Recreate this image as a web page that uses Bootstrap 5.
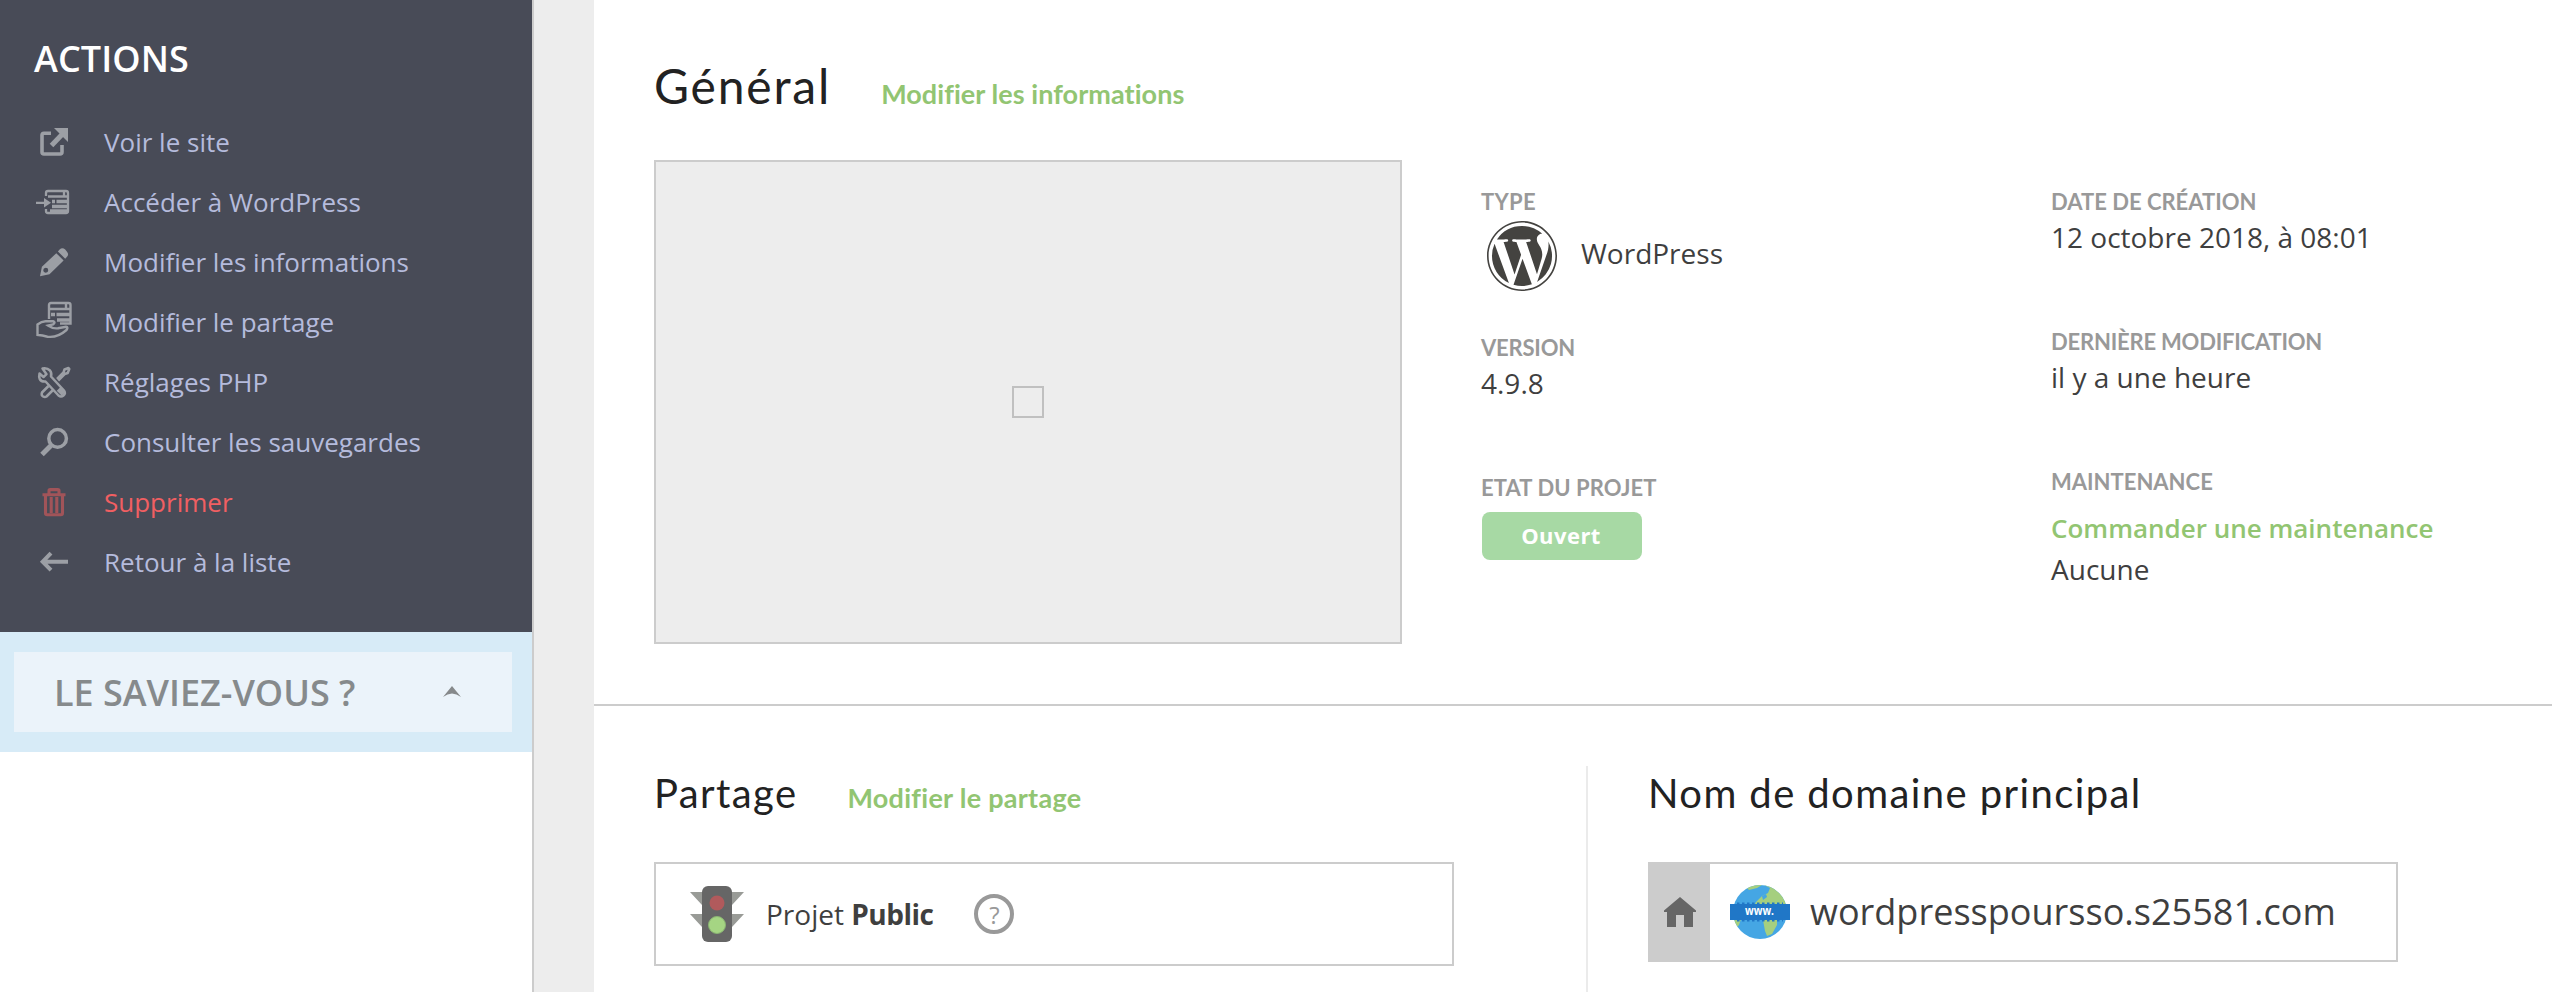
<!DOCTYPE html>
<html lang="fr">
<head>
<meta charset="utf-8">
<meta name="viewport" content="width=device-width, initial-scale=1">
<title>Projet WordPress</title>
<link href="https://cdn.jsdelivr.net/npm/bootstrap@5.3.0/dist/css/bootstrap.min.css" rel="stylesheet">
<style>
  body { font-family: "Open Sans", sans-serif; font-size: 28px; line-height: 40px; color: #3f3f3f; background: #ededed; }
  .shell { height: 992px; }
  a { text-decoration: none; }

  /* Sidebar */
  .side { width: 534px; border-right: 2px solid #ccc; background: #fff; }
  .actions { height: 632px; padding: 35px 0 0 34px; background: #484b57; }
  .actions h2 { font-size: 36px; line-height: 48px; font-weight: 600; letter-spacing: .1px; color: #fff; margin: 0 0 29px; }
  .actions a { height: 60px; gap: 30px; font-size: 26px; line-height: 60px; color: #b5bbdc; }
  .actions span { padding-bottom: 1px; }
  .actions svg { width: 40px; height: 40px; color: #9c9fa5; margin-bottom: 2px; }
  .actions a.remove { color: #f15f62; }
  .actions a.remove svg { color: #a15459; }
  .tip { height: 120px; padding: 20px 20px 20px 14px; background: #d7ebf7; }
  .tip-head { background: #ebf3fa; padding: 2px 49px 0 40px; font-size: 36px; font-weight: 600; color: #868a8c; }
  .tip-head svg { width: 22px; height: 12px; margin-bottom: 2px; }

  /* Main panel */
  .panel { margin-left: 60px; background: #fff; min-width: 0; }
  .general { height: 706px; padding: 54px 60px 0; border-bottom: 2px solid #ccc; }
  h1, h3 { font-family: Lato, sans-serif; font-weight: 400; color: #222; margin: 0; white-space: nowrap; }
  h1 { font-size: 48px; line-height: 64px; letter-spacing: 1.8px; }
  h3 { font-size: 40px; line-height: 52px; letter-spacing: 1.4px; }
  .edit { font-family: Lato, sans-serif; font-size: 27px; font-weight: 700; color: #92c572; letter-spacing: .06px; }
  .preview-row { margin-top: 42px; }
  .shot { width: 748px; height: 484px; border: 2px solid #ccc; background: #ededed; margin-right: 79px; }
  .shot i { width: 32px; height: 32px; border: 2px solid #c0c0c0; }
  .facts { width: 570px; padding-top: 27px; }
  .fact { height: 140px; }
  .fact.tall { height: 146px; }
  .fact-label { font-family: Lato, sans-serif; font-size: 22px; font-weight: 700; line-height: 30px; color: #999; text-transform: uppercase; white-space: nowrap; }
  .state { width: 160px; height: 48px; margin: 9px 0 0 1px; border-radius: 8px; background: #a7d9a4; color: #fff; font-size: 22px; font-weight: 700; letter-spacing: .45px; line-height: 46px; padding-right: 2px; }
  .order { font-size: 26px; font-weight: 600; color: #92c572; margin: 11px 0 1px; }

  /* Lower columns */
  .lower { padding-top: 61px; height: 286px; }
  .share { width: 994px; padding-left: 60px; }
  .share-box { width: 800px; height: 104px; margin-top: 43px; border: 2px solid #ccc; padding-left: 34px; }
  .share-box > span { padding-bottom: 1px; }
  .help { width: 40px; height: 40px; border: 4px solid #999; border-radius: 50%; color: #999; font-size: 24px; line-height: 33px; margin-left: 41px; }
  .domain { padding-left: 60px; border-left: 2px solid #ebebeb; margin: -1px 0 0 -2px; padding-top: 1px; }
  .domain-box { width: 750px; height: 100px; margin-top: 43px; border: 2px solid #ccc; }
  .home { width: 60px; background: #ccc; padding-left: 14px; }
  .host { font-size: 36px; letter-spacing: .02px; margin-left: 20px; line-height: 50px; }
</style>
</head>
<body>
<div class="shell d-flex overflow-hidden">

  <aside class="side flex-shrink-0">
    <nav class="actions d-flex flex-column">
      <h2>ACTIONS</h2>
      <a href="#" class="d-flex align-items-center">
        <svg viewBox="0 0 40 40" fill="none" stroke="currentColor" stroke-width="3.6"><path d="M17 12.2H10a2 2 0 0 0-2 2V31a2 2 0 0 0 2 2h16a2 2 0 0 0 2-2v-7"/><path d="M17.5 24.5 29 12.5" stroke-width="5"/><path d="M20 7h14v14z" fill="currentColor" stroke="none"/></svg>
        <span>Voir le site</span></a>
      <a href="#" class="d-flex align-items-center">
        <svg viewBox="0 0 40 40" fill="none" stroke="currentColor" stroke-width="2.300"><path d="M12 15v-3q0-2 2-2h18q2 0 2 2v18q0 2-2 2H14q-2 0-2-2v-2M14 15.500h20M2 21.800h11M30 11v4"/><path d="M10 17l7 4.800-7 4.800z" fill="currentColor" stroke="none"/><path d="M18 20.500h3M22.500 20.500H33M18 25.500h15M16 30h17" stroke-width="3.400"/></svg>
        <span>Accéder à WordPress</span></a>
      <a href="#" class="d-flex align-items-center">
        <svg viewBox="0 0 40 40" fill="currentColor"><path d="M25.600 8.600q2.800-2.800 5.600 0l1.600 1.800q2.600 2.900 0 5.600l-1.600 1.700-7.300-7.300z"/><path fill-rule="evenodd" d="M22.300 12.200l7.300 7.300L15.500 33.300 6 35.300l1.900-9.600zM11.700 26.800a2.500 2.500 0 1 0 .1 5 2.500 2.500 0 0 0-.1-5z"/></svg>
        <span>Modifier les informations</span></a>
      <a href="#" class="d-flex align-items-center">
        <svg viewBox="0 0 40 40" fill="none" stroke="currentColor" stroke-width="2.400"><path d="M15 18V4q0-2 2-2h17.500q2 0 2 2v18.500H26M15 8h22M32 3v5"/><path d="M17 13.500h4M22.500 13.500H36M23 19h13" stroke-width="3.600"/><path d="M3.500 23.500q4-3.300 8-3.300H19q3 1.200 0 3.200L14 24.500q5 3.500 10 2.800l8-1.500q2.500.3.500 3.200-9 8-19 6.700l-5-1.200-5-.6z"/></svg>
        <span>Modifier le partage</span></a>
      <a href="#" class="d-flex align-items-center">
        <svg viewBox="0 0 40 40" fill="none" stroke="currentColor" stroke-width="2.500" stroke-linejoin="round"><path d="M8.500 7.500q4.500-1 7.500 2 2 2.500 1 6L30 29.500q2 3-.5 5t-5 0L11.500 20.500q-4 .5-5.800-2.500-1-2-.2-5.500l4 3.500 3-2.800z"/><path d="M23 18l6.500-6.500 1-3 4-1.500.8 1-1.600 4-3 1-6.500 6.500M14.500 25L8 31.500q-1 3 1 4t3.500 0l6.500-6.500"/><path d="M24.500 28l5 5" stroke-width="5"/></svg>
        <span>Réglages PHP</span></a>
      <a href="#" class="d-flex align-items-center">
        <svg viewBox="0 0 40 40" fill="none" stroke="currentColor"><circle cx="23.600" cy="17.400" r="8.800" stroke-width="3.500"/><path d="M17 24.500 8 33.500" stroke-width="5"/></svg>
        <span>Consulter les sauvegardes</span></a>
      <a href="#" class="remove d-flex align-items-center">
        <svg viewBox="0 0 40 40" fill="none" stroke="currentColor" stroke-width="3.100"><path d="M15 13V9.800q0-1.200 1.200-1.200h7.600q1.200 0 1.200 1.200V13M8.500 13.800h23M11.500 14v18q0 1.700 1.700 1.700h13.600q1.700 0 1.700-1.700V14M17.200 16v16M22.800 16v16"/></svg>
        <span>Supprimer</span></a>
      <a href="#" class="d-flex align-items-center">
        <svg viewBox="0 0 40 40" fill="none" stroke="currentColor" stroke-width="4"><path d="M34 20.700H9M17 12.200l-8.300 8.500 8.300 8.500"/></svg>
        <span>Retour à la liste</span></a>
    </nav>
    <div class="tip">
      <div class="tip-head h-100 d-flex align-items-center justify-content-between">
        <span>LE SAVIEZ-VOUS ?</span>
        <svg viewBox="0 0 22 12" fill="#86898b"><path d="M11 0 20 11q-9-7-18 0z"/></svg>
      </div>
    </div>
  </aside>

  <main class="panel flex-grow-1">
    <section class="general">
      <div class="d-flex align-items-baseline">
        <h1>Général</h1>
        <a href="#" class="edit" style="margin-left:50px">Modifier les informations</a>
      </div>
      <div class="preview-row d-flex">
        <div class="shot d-flex align-items-center justify-content-center flex-shrink-0"><i></i></div>
        <div class="facts flex-shrink-0">
          <div class="fact tall">
            <div class="fact-label" style="letter-spacing:.3px">Type</div>
            <div class="d-flex align-items-center" style="margin:4px 0 0 6px">
              <svg width="70" height="70" viewBox="0 0 16 16" fill="#444340"><path d="M12.633 7.653c0-.848-.305-1.435-.566-1.892l-.08-.13c-.317-.51-.594-.958-.594-1.480 0-.63.478-1.218 1.152-1.218q.03 0 .058.003l.031.003A6.840 6.840 0 0 0 8 1.137 6.860 6.860 0 0 0 2.266 4.230c.16.005.313.009.442.009.717 0 1.828-.087 1.828-.087.37-.022.414.521.044.565 0 0-.371.044-.785.065l2.500 7.434 1.500-4.506-1.070-2.929c-.369-.022-.719-.065-.719-.065-.37-.022-.326-.588.043-.566 0 0 1.134.087 1.808.087.718 0 1.830-.087 1.830-.087.37-.022.413.522.043.566 0 0-.372.043-.785.065l2.480 7.377.684-2.287.054-.173c.27-.86.469-1.495.469-2.046zM1.137 8a6.860 6.860 0 0 0 3.868 6.176L1.730 5.206A6.800 6.800 0 0 0 1.137 8"/><path d="M6.061 14.583 8.121 8.600l2.109 5.780q.02.05.049.094a6.850 6.850 0 0 1-4.218.109m7.960-9.876q.046.328.047.706c0 .696-.13 1.479-.522 2.458l-2.096 6.060a6.860 6.860 0 0 0 2.572-9.224z"/><path fill-rule="evenodd" d="M0 8c0-4.411 3.589-8 8-8s8 3.589 8 8-3.590 8-8 8-8-3.589-8-8m.367 0c0 4.209 3.424 7.633 7.633 7.633S15.632 12.209 15.632 8 12.208.367 8 .367.367 3.791.367 8"/></svg>
              <span style="margin-left:24px;padding-bottom:7px">WordPress</span>
            </div>
          </div>
          <div class="fact">
            <div class="fact-label" style="letter-spacing:-.2px">Version</div>
            <div>4.9.8</div>
          </div>
          <div class="fact">
            <div class="fact-label" style="letter-spacing:.1px">Etat du projet</div>
            <div class="state text-center">Ouvert</div>
          </div>
        </div>
        <div class="facts flex-shrink-0">
          <div class="fact">
            <div class="fact-label">Date de création</div>
            <div>12 octobre 2018, à 08:01</div>
          </div>
          <div class="fact">
            <div class="fact-label" style="letter-spacing:-.2px">Dernière modification</div>
            <div>il y a une heure</div>
          </div>
          <div class="fact">
            <div class="fact-label">Maintenance</div>
            <div class="order">Commander une maintenance</div>
            <div>Aucune</div>
          </div>
        </div>
      </div>
    </section>

    <div class="lower d-flex">
      <section class="share flex-shrink-0">
        <div class="d-flex align-items-baseline">
          <h3>Partage</h3>
          <a href="#" class="edit" style="margin-left:50px;letter-spacing:.27px">Modifier le partage</a>
        </div>
        <div class="share-box d-flex align-items-center">
          <svg width="54" height="58" viewBox="0 0 54 58"><path d="M0 7h54L42 20H12zM0 29h54L42 42H12z" fill="#999b97"/><rect x="12" y="1" width="30" height="56" rx="6" fill="#666"/><circle cx="27" cy="18" r="7.500" fill="#b15a5c"/><circle cx="27" cy="40" r="8.500" fill="#a5d583" stroke="#8ab473" stroke-width="1"/></svg>
          <span style="margin-left:22px">Projet <b style="letter-spacing:-.5px">Public</b></span>
          <div class="help text-center">?</div>
        </div>
      </section>
      <section class="domain">
        <h3>Nom de domaine principal</h3>
        <div class="domain-box d-flex align-items-stretch">
          <div class="home d-flex align-items-center"><svg width="32" height="30" viewBox="0 0 32 30" fill="#666"><path d="M16 0 32 13.500V15h-3v15h-9V18h-8v12H3V15H0v-1.500z"/></svg></div>
          <div class="d-flex align-items-center" style="padding-left:20px">
            <svg width="60" height="56" viewBox="0 0 60 56"><defs><clipPath id="globe"><circle cx="30" cy="28" r="27"/></clipPath></defs><g clip-path="url(#globe)"><path d="M0 0h60v56H0z" fill="#45a6e4"/><path d="M17 4q6-4 15-3l-5 3-8 2zM34 1l6 3-2 5-6 3-6 6-2 4 6-2 8 3v3h24V6L44 0zM0 35h11l-2 6-4 4zM33 36h14v5l-5 9-5 2-2-5z" fill="#a5cf7f"/><path d="M32 12l4-2 1 3-4 3z" fill="#45a6e4"/></g><path d="M0 20h60v16H0z" fill="#2077c7"/><path d="M7 20h46M7 36h46" stroke="#2077c7" stroke-width="3" stroke-dasharray="2.500 2.500"/><text x="29.500" y="31" text-anchor="middle" textLength="29" lengthAdjust="spacingAndGlyphs" font-family="Open Sans, sans-serif" font-weight="700" font-size="12" fill="#fff">www.</text></svg>
            <span class="host">wordpresspoursso.s25581.com</span>
          </div>
        </div>
      </section>
    </div>
  </main>
</div>
<script src="https://cdn.jsdelivr.net/npm/bootstrap@5.3.0/dist/js/bootstrap.bundle.min.js"></script>
</body>
</html>
